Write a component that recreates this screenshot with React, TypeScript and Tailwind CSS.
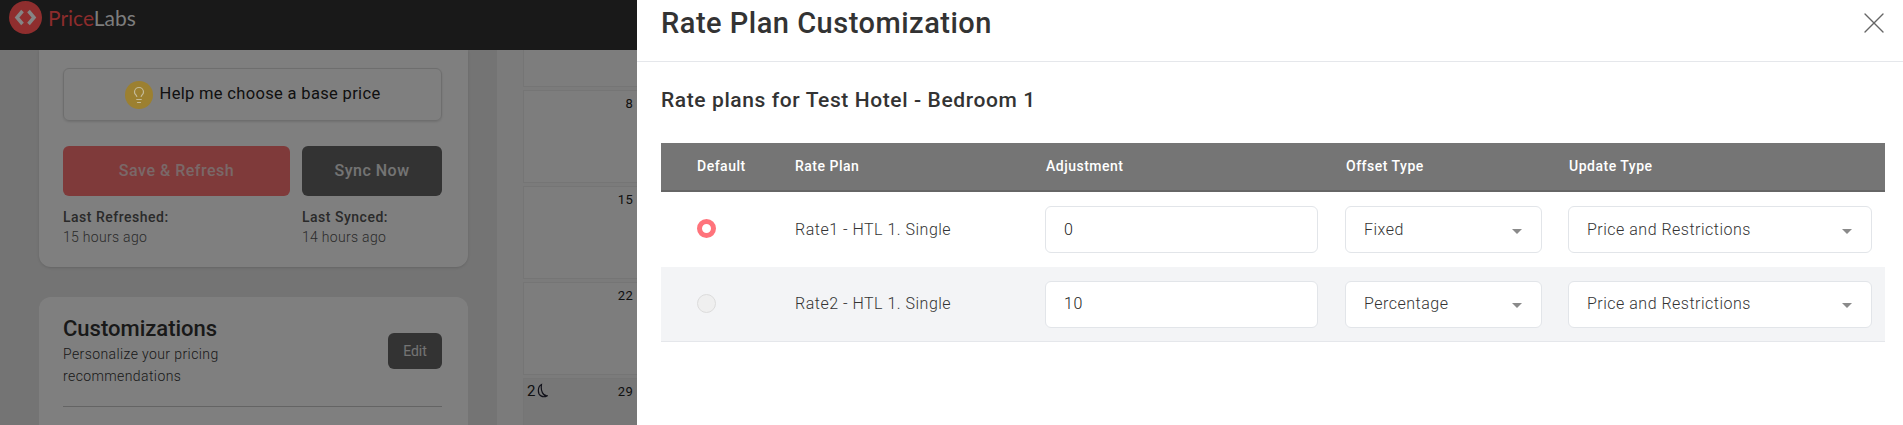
import { Lightbulb, X } from "lucide-react";

const font = { fontFamily: 'Roboto, "Liberation Sans", sans-serif' };

function Caret() {
  return <span className="ml-auto mr-[19px] mt-[3px] h-0 w-0 border-x-[5px] border-t-[5px] border-x-transparent border-t-[#8a8a8a]" />;
}

function Row({ rate, value, offset, alt, on }: { rate: string; value: string; offset: string; alt?: boolean; on?: boolean }) {
  return (
    <div className={`grid h-[75px] grid-cols-[118px_250px_300px_223px_333px] items-center ${alt ? "border-b border-[#e5e7eb] bg-[#f3f4f6]" : ""}`}>
      <div className="pb-[2px] pl-[36px]">
        <span className={`block h-[19px] w-[19px] rounded-full ${on ? "border-[5px] border-[#ff737b] bg-white" : "border border-[#dcdcdc] bg-[#efefef]"}`} />
      </div>
      <div className="pl-[16px] text-[16px] font-light tracking-[0.5px] text-[#333]">{rate}</div>
      <div className="pl-[16px] pr-[11px]">
        <div className="flex h-[47px] items-center rounded-md border border-[#e2e5e9] bg-white pl-[18px] text-[16px] font-light tracking-[0.5px] text-[#222]">{value}</div>
      </div>
      <div className="pl-[16px] pr-[10px]">
        <div className="flex h-[47px] items-center rounded-md border border-[#e2e5e9] bg-white pl-[18px] text-[16px] font-light tracking-[0.5px] text-[#333]">{offset}<Caret /></div>
      </div>
      <div className="pl-[16px] pr-[13px]">
        <div className="flex h-[47px] items-center rounded-md border border-[#e2e5e9] bg-white pl-[18px] text-[16px] font-light tracking-[0.5px] text-[#333]">Price and Restrictions<Caret /></div>
      </div>
    </div>
  );
}

function Cell({ day, dark, mark }: { day: string; dark?: boolean; mark?: boolean }) {
  return (
    <div className={`flex h-[93px] shrink-0 justify-between border border-[#ebebeb] pl-[3px] pr-[7px] pt-[3px] text-[13px] text-[#222] ${dark ? "bg-[#eeeeee]" : "bg-[#fbfbfb]"}`}>
      <span className="flex items-start text-[15px] leading-[18px]">
        {mark && (
          <>
            2
            <svg width="13" height="16" viewBox="0 0 12 14" className="mt-px" fill="none" stroke="#223" strokeWidth="1.1">
              <path d="M6 1C2.5 2.5 2 9.5 5.5 11.5C7.5 12.7 9.5 12.4 11 11.5C7.5 11.5 5 7 6 1Z" />
            </svg>
          </>
        )}
      </span>
      <span className="pt-[2px] leading-[16px] tracking-[0.3px]">{day}</span>
    </div>
  );
}

export default function App() {
  return (
    <div className="relative h-[425px] w-[1903px] overflow-hidden bg-[#e8e8e8]" style={font}>
      <header className="relative flex h-[50px] items-start bg-[#323232] pl-[9px] pt-px">
        <div className="relative z-[25] flex items-start">
          <svg width="33" height="33" viewBox="0 0 33 33">
            <circle cx="16.5" cy="16.5" r="16.5" fill="#8f2e2e" />
            <path d="M13.5 10L8 16.5L13.5 23M19.5 10L25 16.5L19.5 23" fill="none" stroke="#858585" strokeWidth="3.5" />
          </svg>
          <span className="ml-[6px] text-[21px] leading-[33px]" style={{ fontFamily: "Lato, sans-serif" }}>
            <span className="text-[#8c2c2c]">Price</span>
            <span className="text-[#7d7d7d]">Labs</span>
          </span>
        </div>
      </header>

      <div className="flex">
        <aside className="w-[497px] shrink-0 pl-[39px] pr-[29px]">
          <section className="rounded-b-xl bg-white pb-[20px] pl-[24px] pr-[26px] pt-[18px] shadow-sm">
            <button className="flex h-[53px] w-full items-center justify-center gap-[7px] rounded-md border border-[#dcdcdc] text-[16.5px] font-normal tracking-[0.33px] text-[#222] shadow-sm">
              <span className="relative z-[25] flex h-[28px] w-[28px] items-center justify-center rounded-full bg-[#9c8030]">
                <Lightbulb size={18} color="#c4bb9a" strokeWidth={1.6} />
              </span>
              Help me choose a base price
            </button>
            <div className="mt-[25px] grid grid-cols-[227px_140px] gap-x-[12px]">
              <button className="h-[50px] rounded-md bg-[#ff7475] text-[16px] font-medium tracking-[0.5px] text-[#f4d0d0]">Save &amp; Refresh</button>
              <button className="h-[50px] rounded-md bg-[#666666] text-[16px] font-medium tracking-[0.5px] text-[#e8e8e8]">Sync Now</button>
              <div className="mt-[11px] text-[14px] leading-[20px] text-[#555]">
                <div className="font-medium tracking-[0.5px]">Last Refreshed:</div>
                <div className="font-light tracking-[0.3px]">15 hours ago</div>
              </div>
              <div className="mt-[11px] text-[14px] leading-[20px] text-[#555]">
                <div className="font-medium tracking-[0.5px]">Last Synced:</div>
                <div className="font-light tracking-[0.3px]">14 hours ago</div>
              </div>
            </div>
          </section>

          <section className="mt-[30px] h-[140px] rounded-t-xl bg-white pl-[24px] pr-[26px] pt-[18px]">
            <div className="flex items-center justify-between border-b border-[#c8c8c8] pb-[19px]">
              <div className="w-[200px]">
                <h2 className="text-[22px] font-medium leading-[28px] text-[#333]">Customizations</h2>
                <p className="text-[14px] font-light leading-[22px] tracking-[0.4px] text-[#333]">Personalize your pricing recommendations</p>
              </div>
              <button className="h-[36px] w-[54px] rounded-md bg-[#666666] text-[14px] font-normal text-[#e8e8e8]">Edit</button>
            </div>
          </section>
        </aside>
        <main className="flex-1 bg-[#f6f6f6] pl-[26px]">
          <div className="-mt-[56px] flex w-[118px] flex-col gap-[3px]">
            <Cell day="" />
            <Cell day="8" />
            <Cell day="15" />
            <Cell day="22" />
            <Cell day="29" dark mark />
          </div>
        </main>
      </div>

      <div className="absolute inset-0 z-20 bg-black/50" />

      <aside className="absolute bottom-0 right-0 top-0 z-30 w-[1266px] bg-white">
        <div className="flex h-[62px] items-start justify-between border-b border-[#e5e7eb] pl-[24px] pr-[11px]">
          <h1 className="text-[29px] font-medium leading-[47px] tracking-[0.5px] text-[#333]">Rate Plan Customization</h1>
          <X size={36} strokeWidth={0.9} color="#666" className="mt-[5px]" />
        </div>
        <div className="pl-[24px] pr-[18px]">
          <h2 className="mt-[23px] text-[21px] font-medium leading-[30px] tracking-[0.6px] text-[#333]">Rate plans for Test Hotel - Bedroom 1</h2>
          <div className="mt-[28px] grid h-[49px] grid-cols-[118px_250px_300px_223px_333px] items-center border-b-2 border-[#666] bg-[#757575] text-[14px] font-medium tracking-[0.5px] text-white">
            <div className="pl-[36px]">Default</div>
            <div className="pl-[16px]">Rate Plan</div>
            <div className="pl-[17px]">Adjustment</div>
            <div className="pl-[17px]">Offset Type</div>
            <div className="pl-[17px]">Update Type</div>
          </div>
          <Row rate="Rate1 - HTL 1. Single" value="0" offset="Fixed" on />
          <Row rate="Rate2 - HTL 1. Single" value="10" offset="Percentage" alt />
        </div>
      </aside>
    </div>
  );
}
